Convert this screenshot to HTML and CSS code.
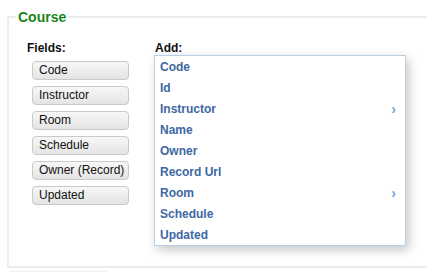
FILE: index.html
```html
<!DOCTYPE html>
<html>
<head>
<meta charset="utf-8">
<link rel="stylesheet" href="styles.css">
</head>
<body>
<fieldset class="course">
  <legend class="course-title">Course</legend>
  <div class="cols">
    <div class="fields">
      <div class="col-head">Fields:</div>
      <div class="btn-list">
        <div class="btn">Code</div>
        <div class="btn">Instructor</div>
        <div class="btn">Room</div>
        <div class="btn">Schedule</div>
        <div class="btn">Owner (Record)</div>
        <div class="btn">Updated</div>
      </div>
    </div>
    <div class="add">
      <div class="col-head add-head">Add:</div>
      <ul class="menu">
        <li class="item">Code</li>
        <li class="item">Id</li>
        <li class="item sub">Instructor<span class="chev">›</span></li>
        <li class="item">Name</li>
        <li class="item">Owner</li>
        <li class="item">Record Url</li>
        <li class="item sub">Room<span class="chev">›</span></li>
        <li class="item">Schedule</li>
        <li class="item">Updated</li>
      </ul>
    </div>
  </div>
</fieldset>
<div class="next"></div>
</body>
</html>
```

FILE: styles.css
```css
html, body {
  margin: 0;
  padding: 0;
  background: #fff;
  overflow: hidden;
}
body {
  font-family: "Liberation Sans", Arial, Helvetica, sans-serif;
  width: 427px;
  height: 272px;
}
.course {
  margin: 9px 0 0 7px;
  padding: 0 0 20px 0;
  border: 2px solid #ececec;
  border-right: none;
  width: 440px;
  box-sizing: border-box;
  min-width: 0;
}
.course-title {
  margin-left: 7px;
  padding: 0 2px;
  font-size: 14px;
  line-height: 16px;
  font-weight: bold;
  color: #1a851a;
}
.cols {
  display: flex;
  padding: 16px 0 0 18px;
}
.fields {
  width: 127px;
}
.col-head {
  font-size: 12px;
  font-weight: bold;
  color: #111;
  line-height: 14px;
}
.btn-list {
  display: flex;
  flex-direction: column;
  gap: 6px;
  margin: 6px 0 0 5px;
}
.btn {
  width: 97px;
  height: 19px;
  box-sizing: border-box;
  border: 1px solid #c9c9c9;
  border-radius: 4px;
  background: linear-gradient(#f7f7f7, #e4e4e4);
  font-size: 12px;
  line-height: 17px;
  padding-left: 6px;
  color: #111;
}
.add-head {
  padding-left: 1px;
}
.menu {
  list-style: none;
  margin: 0;
  padding: 0;
  width: 252px;
  box-sizing: border-box;
  border: 1px solid #b7d2e8;
  background: #fff;
  box-shadow: 3px 4px 10px rgba(0, 0, 0, 0.22);
}
.item {
  display: flex;
  justify-content: space-between;
  align-items: center;
  height: 21px;
  padding: 0 9px 0 5px;
  font-size: 12px;
  font-weight: bold;
  color: #3d68a3;
}
.chev {
  color: #6fa8dc;
  font-size: 14px;
  font-weight: bold;
}
.next {
  margin: 3px 0 0 8px;
  width: 102px;
  height: 8px;
  background: #f0f0f0;
  border-radius: 4px 4px 0 0;
}
```
